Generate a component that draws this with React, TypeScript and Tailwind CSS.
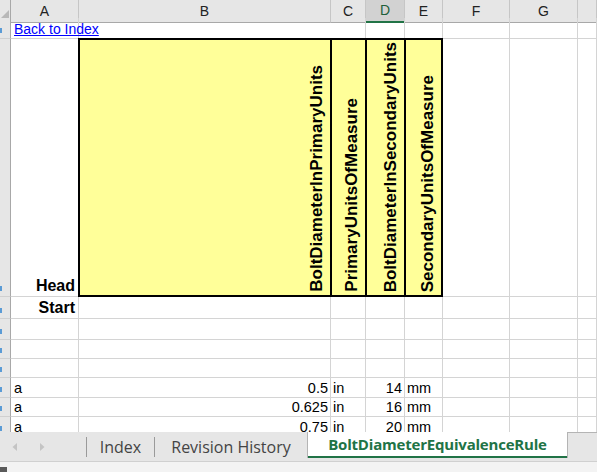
import React from "react";

const GRID = "grid grid-cols-[11px_68px_252px_35px_39px_38px_67px_68px_1fr]";
const CELL_FONT = "font-['Liberation_Sans',Arial,sans-serif]";
const GRIDLINE = "border-r border-b border-[#d4d4d4]";

const letters = ["A", "B", "C", "D", "E", "F", "G", ""];

type Row = {
  h: string;
  a?: React.ReactNode;
  aAlign?: "left" | "right";
  b?: string;
  c?: string;
  d?: string;
  e?: string;
};

const rows: Row[] = [
  { h: "h-[22px]", a: "Start", aAlign: "right" },
  { h: "h-[21px]" },
  { h: "h-[19px]" },
  { h: "h-[19px]" },
  { h: "h-[20px]", a: "a", b: "0.5", c: "in", d: "14", e: "mm" },
  { h: "h-[19px]", a: "a", b: "0.625", c: "in", d: "16", e: "mm" },
  { h: "h-[20px]", a: "a", b: "0.75", c: "in", d: "20", e: "mm" },
];

function RowHead({ h }: { h: string }) {
  return (
    <div className={`${h} relative bg-[#e6e6e6] border-r border-b border-r-[#a8a8a8] border-b-[#d0d0d0]`}>
      <span className="absolute left-0 bottom-[5px] w-[2px] h-[5px] bg-[#5b9bd5]" />
    </div>
  );
}

function Blank() {
  return <div className={GRIDLINE} />;
}

function Value({ text, right }: { text?: string; right?: boolean }) {
  return (
    <div
      className={`${GRIDLINE} flex items-end overflow-visible whitespace-nowrap text-[14.5px] leading-[17px] text-black ${
        right ? "justify-end pr-[2px]" : "justify-start pl-[2px]"
      }`}
    >
      {text}
    </div>
  );
}

function Vertical({ text, last }: { text: string; last?: boolean }) {
  return (
    <div
      className={`flex items-end justify-end pr-[4px] pb-[3px] ${last ? "" : "border-r-2 border-black"}`}
    >
      <span className="[writing-mode:vertical-rl] rotate-180 whitespace-nowrap font-bold text-[17px] leading-[19px] text-black">
        {text}
      </span>
    </div>
  );
}

function SheetTabs() {
  return (
    <div className="relative h-[30px] bg-[#e6e6e6] border-b border-[#d0d0d0] flex items-stretch font-['Open_Sans','Noto_Sans',sans-serif]">
      {/* scroll arrows */}
      <div className="w-[86px] flex items-center pl-[11px] gap-[21px]">
        <svg width="7" height="10" viewBox="0 0 7 10">
          <path d="M6 1 L1.5 5 L6 9 Z" fill="#c4c4c4" />
        </svg>
        <svg width="7" height="10" viewBox="0 0 7 10">
          <path d="M1 1 L5.5 5 L1 9 Z" fill="#c4c4c4" />
        </svg>
      </div>
      <div className="w-px h-[20px] self-center bg-[#9a9a9a]" />
      <div className="w-[67px] flex items-center justify-center text-[16px] text-[#444]">Index</div>
      <div className="w-px h-[20px] self-center bg-[#9a9a9a]" />
      <div className="w-[152px] flex items-center justify-center text-[16px] text-[#444]">Revision History</div>
      <div className="w-[261px] h-[26px] bg-white border-x border-[#b4b4b4] flex flex-col">
        <div className="flex-1 flex items-center justify-center text-[15px] font-bold text-[#217346] tracking-[-0.2px]">
          BoltDiameterEquivalenceRule
        </div>
        <div className="h-[2px] bg-[#217346]" />
      </div>
      <div className="flex-1 border-t border-[#b4b4b4]" />
    </div>
  );
}

export default function App() {
  return (
    <div className="w-[597px] h-[472px] overflow-hidden bg-white flex flex-col">
      <div className={`h-[432px] overflow-hidden ${CELL_FONT}`}>
        {/* column letters */}
        <div className={`${GRID} h-[18px]`}>
          <div className="relative bg-[#e6e6e6] border-r border-b border-[#a8a8a8]">
            <svg className="absolute right-[1px] bottom-[3px]" width="9" height="9" viewBox="0 0 9 9">
              <path d="M9 0 L9 9 L0 9 Z" fill="#b8b8b8" />
            </svg>
          </div>
          {letters.map((l, i) =>
            l === "D" ? (
              <div
                key={i}
                className="bg-[#d2d2d2] border-r border-r-[#c6c6c6] border-b-2 border-b-[#217346] flex items-center justify-center text-[14px] text-[#1e5f3a]"
              >
                {l}
              </div>
            ) : (
              <div
                key={i}
                className="bg-[#e6e6e6] border-r border-r-[#c6c6c6] border-b border-b-[#a8a8a8] flex items-center justify-center text-[14px] text-[#222]"
              >
                {l}
              </div>
            )
          )}
        </div>

        {/* row 1: hyperlink */}
        <div className={`${GRID} h-[21px]`}>
          <RowHead h="h-[21px]" />
          <div className={`${GRIDLINE} flex items-end pl-[3px] overflow-visible whitespace-nowrap`}>
            <a href="#" className="text-[14px] leading-[17px] text-[#0000ff] underline relative z-10">
              Back to Index
            </a>
          </div>
          <div className="border-b border-[#d4d4d4]" />
          <Blank />
          <Blank />
          <Blank />
          <Blank />
          <Blank />
          <Blank />
        </div>

        {/* row 2: rotated column titles */}
        <div className={`${GRID} h-[258px]`}>
          <RowHead h="h-[258px]" />
          <div className={`${GRIDLINE} flex items-end justify-end pr-[3px] pb-[1px] font-bold text-[16px] leading-[18px]`}>
            Head
          </div>
          <div className="col-span-4 -mt-px -ml-px bg-[#ffff99] border-2 border-black grid grid-cols-[252px_35px_39px_35px]">
            <Vertical text="BoltDiameterInPrimaryUnits" />
            <Vertical text="PrimaryUnitsOfMeasure" />
            <Vertical text="BoltDiameterInSecondaryUnits" />
            <Vertical text="SecondaryUnitsOfMeasure" last />
          </div>
          <Blank />
          <Blank />
          <Blank />
        </div>

        {rows.map((r, i) => (
          <div key={i} className={`${GRID} ${r.h}`}>
            <RowHead h={r.h} />
            {r.aAlign === "right" ? (
              <div className={`${GRIDLINE} flex items-end justify-end pr-[3px] pb-[1px] font-bold text-[16px] leading-[18px]`}>
                {r.a}
              </div>
            ) : (
              <div className={`${GRIDLINE} flex items-end pl-[3px] text-[14.5px] leading-[17px]`}>{r.a}</div>
            )}
            <Value text={r.b} right />
            <Value text={r.c} />
            <Value text={r.d} right />
            <Value text={r.e} />
            <Blank />
            <Blank />
            <Blank />
          </div>
        ))}
      </div>

      <SheetTabs />

      {/* status strip */}
      <div className="flex-1 bg-[#f3f3f3] relative">
        <div className="absolute left-0 bottom-0 w-[7px] h-[5px] bg-[#5a5a5a]" />
      </div>
    </div>
  );
}
